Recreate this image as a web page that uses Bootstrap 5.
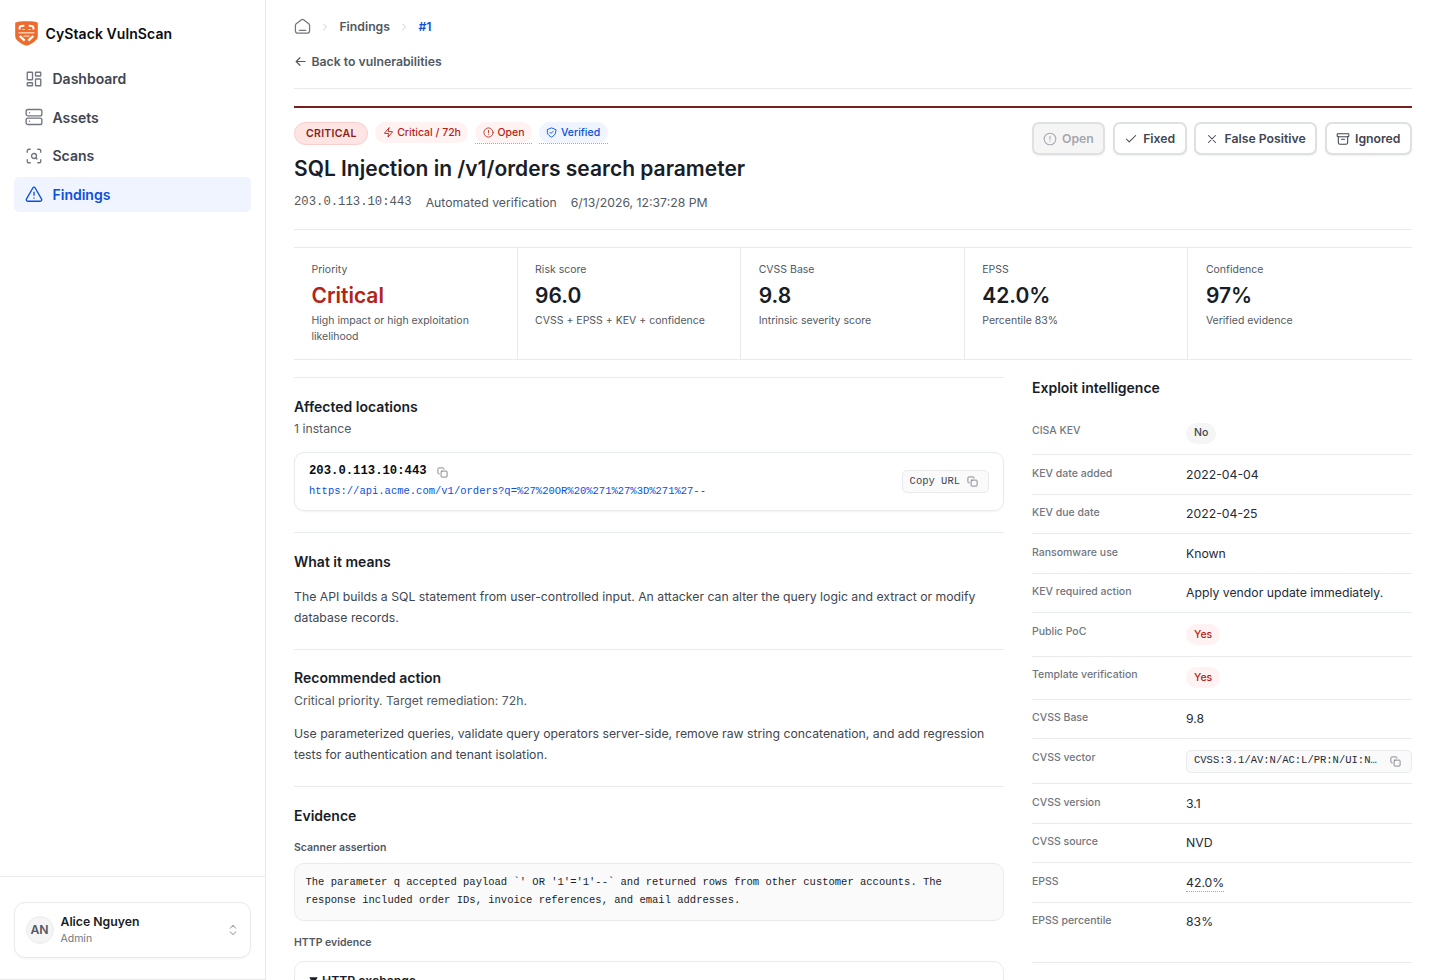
<!DOCTYPE html>
<html lang="en">
<head>
<meta charset="utf-8">
<meta name="viewport" content="width=device-width, initial-scale=1">
<title>CyStack VulnScan</title>
<link href="https://cdn.jsdelivr.net/npm/bootstrap@5.3.0/dist/css/bootstrap.min.css" rel="stylesheet">
<style>
:root{--line:#e9eaeb;--ink:#181d27;--ink2:#414651;--ink3:#535862;--blue:#0a50dc}
html{font-size:14px}
body{font-family:Inter,"Liberation Sans",sans-serif;color:var(--ink);font-size:12.25px;line-height:17.5px;height:980px;overflow:hidden;background:#fff}
svg.ic{fill:none;stroke:currentColor;stroke-width:1.8;stroke-linecap:round;stroke-linejoin:round;flex:none;display:block}
.ic-gray{color:#717680}
.ic-soft{color:#a4a7ae}
.ic-faint{color:#c4c7cc}
.mono{font-family:"Courier New","Liberation Mono",monospace}
.side{width:266px;height:980px;border-right:1px solid var(--line);border-bottom:1px solid var(--line);flex:none}
.brand{padding:20px 14px 0;height:61.3px;gap:6.5px;font-size:14px;font-weight:600;color:#0a0d12;letter-spacing:.08px}
.brand svg{flex:none}
.brand span{margin-top:5px}
.side-nav{padding:0 14px;gap:3.5px}
.side-nav .nav-link{height:35px;padding:0 10.5px;border-radius:5px;font-size:14px;font-weight:600;color:var(--ink2);gap:10px}
.side-nav .nav-link svg{color:#717680}
.side-nav .nav-link.active{background:#eff4ff;color:var(--blue)}
.side-nav .nav-link.active svg{color:var(--blue)}
.account{border-top:1px solid var(--line);padding:25px 14px 21px}
.user{border:1px solid var(--line);border-radius:11px;height:56px;padding:0 10.5px;box-shadow:0 1px 2px rgba(10,13,18,.05)}
.avatar{width:28px;height:28px;border-radius:50%;background:#f5f5f5;border:1px solid #ebebeb;font-weight:600;color:var(--ink3)}
.xs{font-size:10.5px;line-height:15.75px}
.page{padding:0 28px;min-width:0}
.crumbs{height:53px;padding-top:1px;gap:8.2px;font-weight:600;color:var(--ink3)}
.crumbs>svg:first-child{margin-top:-1px}
.back{height:17px;gap:4.5px;font-weight:600;color:var(--ink3)}
.rule{height:19px;border-bottom:1px solid var(--line)}
.finding{margin-top:17px;border-top:2px solid #7a1f1f;border-bottom:1px solid var(--line);height:124px;padding-top:14px}
.pill{height:21px;border-radius:11px;font-size:10.5px;line-height:15.75px;font-weight:500;padding:0 7.5px;gap:3.5px;background:#fef3f2;color:#b42318}
.pill.sev{height:23px;border:1px solid #f8cfcc;background:#fee4e2;color:#8a1c1c;font-weight:600;letter-spacing:.28px;padding:0 10.5px 0 11px;border-radius:12px}
.hint{border-bottom:1px dotted #a4a7ae;height:22px}
.pill.info{background:#eff4ff;color:var(--blue)}
.pill.neutral{background:#f5f5f5;color:var(--ink2)}
.fact .pill{padding:0 8px}
h1{font-size:21px;line-height:28px;font-weight:600;margin:10px 0 11px}
.act{height:33px;border:2px solid #dfe0e2;border-radius:7px;font-size:12.25px;line-height:17px;font-weight:600;color:var(--ink2);padding:0 9.5px 0 9px;gap:5.3px;background:#fff;box-shadow:0 1px 2px rgba(10,13,18,.06)}
.act.off{background:#f5f5f5;color:#a4a7ae}
.stats{margin-top:17px;height:113px;border-top:1px solid var(--line);border-bottom:1px solid var(--line)}
.stats>div{padding:14px 17.5px;color:var(--ink3)}
.stats>div:not(:last-child){border-right:1px solid var(--line)}
.stats b{display:block;font-size:21px;line-height:28px;font-weight:600;color:var(--ink);margin:4px 0 3px}
.stats b.crit{color:#b42318}
.left{width:710px;flex:none;padding-top:17px}
.left section{border-top:1px solid var(--line);padding-top:18px}
h2{font-size:14px;line-height:21px;font-weight:600;margin:0}
.sub{color:var(--ink3);line-height:17.5px}
.left h2+.sub{margin-top:3px}
.left p{color:var(--ink2);line-height:21px;margin:14px 0 0}
.box{border:1px solid var(--line);border-radius:10px}
.loc{height:59px;padding:0 14px;margin-top:14px;box-shadow:0 1px 2px rgba(10,13,18,.05)}
.host{gap:10px;font-weight:600;color:#0a0d12;padding-top:1px}
.chip{height:23px;border:1px solid var(--line);background:#fafafa;border-radius:5px;padding:0 10px 0 7px;font-size:10.5px;color:var(--ink2)}
.chip svg,.loc svg{color:#717680}
.code{background:#fafafa;height:58px;padding:10px 10.5px;font-size:10.5px;line-height:17.85px}
.label{color:var(--ink3);font-weight:600}
.right{flex:1;min-width:0;padding-top:17px}
.fact{border-bottom:1px solid var(--line);padding:10.5px 0;height:39.5px}
.fact.tall{height:43.25px}
.fact.last{height:60.5px}
.fact>span:first-child{width:154px;flex:none;color:#717680;font-weight:500}
.fact>span:last-child{color:#252b37}
.fact .dotted{display:block;height:18px;border-bottom:1px dotted #a4a7ae}
</style>
</head>
<body>
<svg width="0" height="0" class="position-absolute">
<symbol id="copy" viewBox="0 0 24 24"><path d="M5 15H4a2 2 0 0 1-2-2V4a2 2 0 0 1 2-2h9a2 2 0 0 1 2 2v1"/><rect x="9" y="9" width="13" height="13" rx="1.500"/></symbol>
<symbol id="alert" viewBox="0 0 24 24"><circle cx="12" cy="12" r="10"/><path d="M12 7.500v5M12 16h.01"/></symbol>
<symbol id="chev" viewBox="0 0 24 24"><path d="m9 18 6-6-6-6"/></symbol>
</svg>
<div class="d-flex">
<aside class="side d-flex flex-column">
  <div class="brand d-flex align-items-start">
    <svg width="25" height="27" viewBox="0 0 25 27" fill="none"><path fill="#ec6b2d" d="M1.200 2.700C5 .8 20 .8 23.800 2.700V16c0 4.200-5 7.500-11.300 9.800C6.200 23.500 1.200 20.200 1.200 16z"/><path stroke="#fff" stroke-width="2" d="M5.600 9.600V7.500Q5.600 6 7.200 5.900L10.300 5.700M14.700 5.700l3.100.2q1.600.1 1.600 1.600v2.100"/><path stroke="#fff" stroke-width="2.300" d="M5.700 16l5 4.700M19.300 16l-5 4.700"/><path stroke="#fbd3bd" stroke-width="1.200" d="M8 9.500h3M14 9.500h3M9.500 16.200h6"/><path stroke="#f9c5a6" stroke-width="1.600" d="M4.500 12.800h16"/></svg>
    <span>CyStack VulnScan</span>
  </div>
  <nav class="side-nav nav flex-column">
    <a class="nav-link d-flex align-items-center"><svg class="ic" width="18" height="18" viewBox="0 0 24 24"><rect x="3" y="3" width="7" height="10" rx=".8"/><rect x="14" y="3" width="7" height="5" rx=".8"/><rect x="14" y="12" width="7" height="9" rx=".8"/><rect x="3" y="17" width="7" height="4" rx=".8"/></svg>Dashboard</a>
    <a class="nav-link d-flex align-items-center"><svg class="ic" width="18" height="18" viewBox="0 0 24 24"><rect x="1.500" y="2" width="21" height="8.500" rx="2.500"/><rect x="1.500" y="13.500" width="21" height="8.500" rx="2.500"/><path d="M6 6.200h.01M6 17.700h.01"/></svg>Assets</a>
    <a class="nav-link d-flex align-items-center"><svg class="ic" width="18" height="18" viewBox="0 0 24 24"><path d="M7 3H5.500Q3 3 3 5.500V7M17 3h1.500Q21 3 21 5.500V7M7 21H5.500Q3 21 3 18.500V17M17 21h1.500q2.500 0 2.500-2.500V17M16 16l-1.500-1.500"/><circle cx="12" cy="12" r="3.300"/></svg>Scans</a>
    <a class="nav-link active d-flex align-items-center"><svg class="ic" width="18" height="18" viewBox="0 0 24 24"><path d="M12 9.500v4M12 17.300h.01M10.600 3.700 1.900 18.800c-.6 1.300.1 2.900 1.700 2.900h16.800c1.600 0 2.300-1.600 1.700-2.900L13.400 3.700c-.7-1.100-2.100-1.100-2.800 0Z"/></svg>Findings</a>
  </nav>
  <div class="account mt-auto">
    <div class="user d-flex align-items-center">
      <span class="avatar d-flex align-items-center justify-content-center">AN</span>
      <div class="flex-grow-1 ps-2"><div class="fw-semibold">Alice Nguyen</div><div class="xs ic-gray">Admin</div></div>
      <svg class="ic ic-soft" width="14" height="14" viewBox="0 0 24 24"><path d="m7 15 5 5 5-5M7 9l5-5 5 5"/></svg>
    </div>
  </div>
</aside>
<main class="page flex-grow-1">
  <div class="crumbs d-flex align-items-center">
    <svg class="ic ic-gray" width="17" height="17" viewBox="0 0 24 24"><path d="M7.500 17.500h9M10 2.800 4.200 7.300C3 8.300 2 9 2 10.500V18c0 2.500 1 3.500 3.500 3.500h13C21 21.500 22 20.500 22 18v-7.500c0-1.500-1-2.200-2.200-3.200L14 2.800c-1.500-1.200-2.500-1.200-4 0Z"/></svg>
    <svg class="ic ic-faint" width="12" height="14"><use href="#chev"/></svg>
    <span>Findings</span>
    <svg class="ic ic-faint" width="12" height="14"><use href="#chev"/></svg>
    <span style="color:var(--blue)">#1</span>
  </div>
  <div class="back d-flex align-items-center"><svg class="ic" width="13" height="13" viewBox="0 0 24 24"><path stroke-width="2.200" d="M20.500 12H4m7-7-7 7 7 7"/></svg>Back to vulnerabilities</div>
  <div class="rule"></div>
  <div class="finding d-flex justify-content-between">
    <div>
      <div class="d-flex" style="gap:7px">
        <span class="pill sev d-flex align-items-center">CRITICAL</span>
        <span class="pill d-flex align-items-center"><svg class="ic" width="11" height="11" viewBox="0 0 24 24"><path stroke-width="2" d="M13 2 3.500 13c-.6.8-.5 1 .5 1h8l-1 8 9.500-11c.6-.8.5-1-.5-1h-8z"/></svg>Critical / 72h</span>
        <span class="hint"><span class="pill d-flex align-items-center"><svg class="ic" width="11" height="11"><use href="#alert"/></svg>Open</span></span>
        <span class="hint"><span class="pill info d-flex align-items-center"><svg class="ic" width="11" height="11" viewBox="0 0 24 24"><path stroke-width="2" d="m8.500 11.500 2.500 2.500 4.500-4.500M21 12c0 4.900-6 8.500-9 10-3-1.500-9-5.100-9-10V5.500L12 2l9 3.500z"/></svg>Verified</span></span>
      </div>
      <h1>SQL Injection in /v1/orders search parameter</h1>
      <div class="d-flex sub" style="gap:14px"><span class="mono">203.0.113.10:443</span><span>Automated verification</span><span>6/13/2026, 12:37:28 PM</span></div>
    </div>
    <div class="d-flex" style="gap:7.5px">
      <button class="act off d-flex align-items-center"><svg class="ic" width="14" height="14"><use href="#alert"/></svg>Open</button>
      <button class="act d-flex align-items-center"><svg class="ic" width="14" height="14" viewBox="0 0 24 24"><path d="M20 6 9 17l-5-5"/></svg>Fixed</button>
      <button class="act d-flex align-items-center"><svg class="ic" width="14" height="14" viewBox="0 0 24 24"><path d="M18 6 6 18M6 6l12 12"/></svg>False Positive</button>
      <button class="act d-flex align-items-center"><svg class="ic" width="14" height="14" viewBox="0 0 24 24"><rect x="2" y="3" width="20" height="5" rx="1"/><path d="M4 8v10q0 3 3 3h10q3 0 3-3V8M9.500 12.500h5"/></svg>Ignored</button>
    </div>
  </div>
  <div class="stats row row-cols-5 g-0">
    <div class="col xs">Priority<b class="crit">Critical</b>High impact or high exploitation likelihood</div>
    <div class="col xs">Risk score<b>96.0</b>CVSS + EPSS + KEV + confidence</div>
    <div class="col xs">CVSS Base<b>9.8</b>Intrinsic severity score</div>
    <div class="col xs">EPSS<b>42.0%</b>Percentile 83%</div>
    <div class="col xs">Confidence<b>97%</b>Verified evidence</div>
  </div>
  <div class="d-flex" style="gap:28px">
    <div class="left">
      <section style="height:155px">
        <h2>Affected locations</h2>
        <div class="sub">1 instance</div>
        <div class="box loc d-flex align-items-center justify-content-between">
          <div class="mono">
            <div class="host d-flex align-items-center">203.0.113.10:443<svg class="ic" width="11" height="11"><use href="#copy"/></svg></div>
            <div class="xs" style="color:var(--blue);margin-top:3px">https://api.acme.com/v1/orders?q=%27%20OR%20%271%27%3D%271%27--</div>
          </div>
          <span class="chip mono d-flex align-items-center" style="gap:7px;padding-top:1px">Copy URL<svg class="ic" width="11" height="11"><use href="#copy"/></svg></span>
        </div>
      </section>
      <section style="height:117px">
        <h2>What it means</h2>
        <p>The API builds a SQL statement from user-controlled input. An attacker can alter the query logic and extract or modify database records.</p>
      </section>
      <section style="height:137px;padding-top:17px">
        <h2>Recommended action</h2>
        <div class="sub" style="padding-top:1px">Critical priority. Target remediation: 72h.</div>
        <p style="margin-top:13px">Use parameterized queries, validate query operators server-side, remove raw string concatenation, and add regression tests for authentication and tenant isolation.</p>
      </section>
      <section>
        <h2>Evidence</h2>
        <div class="xs label" style="margin:13.5px 0 7.5px">Scanner assertion</div>
        <div class="box code mono">The parameter q accepted payload `' OR '1'='1'--` and returned rows from other customer accounts. The<br>response included order IDs, invoice references, and email addresses.</div>
        <div class="xs label" style="margin:14px 0 10.5px">HTTP evidence</div>
        <div class="box fw-semibold d-flex align-items-start" style="height:60px;padding:10px 14px;gap:4px"><svg width="9" height="17" viewBox="0 0 9 17"><path fill="#181d27" d="M.3 5.200h8.400L4.500 12.500z"/></svg>HTTP exchange</div>
      </section>
    </div>
    <div class="right">
      <h2>Exploit intelligence</h2>
      <div style="margin-top:14px">
        <div class="fact tall d-flex"><span class="xs">CISA KEV</span><span><span class="pill neutral d-flex align-items-center">No</span></span></div>
        <div class="fact d-flex"><span class="xs">KEV date added</span><span>2022-04-04</span></div>
        <div class="fact d-flex"><span class="xs">KEV due date</span><span>2022-04-25</span></div>
        <div class="fact d-flex"><span class="xs">Ransomware use</span><span>Known</span></div>
        <div class="fact d-flex"><span class="xs">KEV required action</span><span>Apply vendor update immediately.</span></div>
        <div class="fact tall d-flex"><span class="xs">Public PoC</span><span><span class="pill d-flex align-items-center" style="padding-top:1px">Yes</span></span></div>
        <div class="fact tall d-flex"><span class="xs">Template verification</span><span><span class="pill d-flex align-items-center">Yes</span></span></div>
        <div class="fact d-flex"><span class="xs">CVSS Base</span><span>9.8</span></div>
        <div class="fact d-flex" style="height:45px"><span class="xs">CVSS vector</span><span class="chip mono d-flex align-items-center flex-grow-1" style="min-width:0"><span class="text-truncate flex-grow-1" style="margin-right:11px;padding-bottom:1px">CVSS:3.1/AV:N/AC:L/PR:N/UI:N/S:U/C:H/I:H/A:H</span><svg class="ic" width="11" height="11"><use href="#copy"/></svg></span></div>
        <div class="fact d-flex"><span class="xs">CVSS version</span><span>3.1</span></div>
        <div class="fact d-flex"><span class="xs">CVSS source</span><span>NVD</span></div>
        <div class="fact d-flex"><span class="xs">EPSS</span><span><span class="dotted">42.0%</span></span></div>
        <div class="fact last d-flex"><span class="xs">EPSS percentile</span><span>83%</span></div>
      </div>
    </div>
  </div>
</main>
</div>
<script src="https://cdn.jsdelivr.net/npm/bootstrap@5.3.0/dist/js/bootstrap.bundle.min.js"></script>
</body>
</html>
